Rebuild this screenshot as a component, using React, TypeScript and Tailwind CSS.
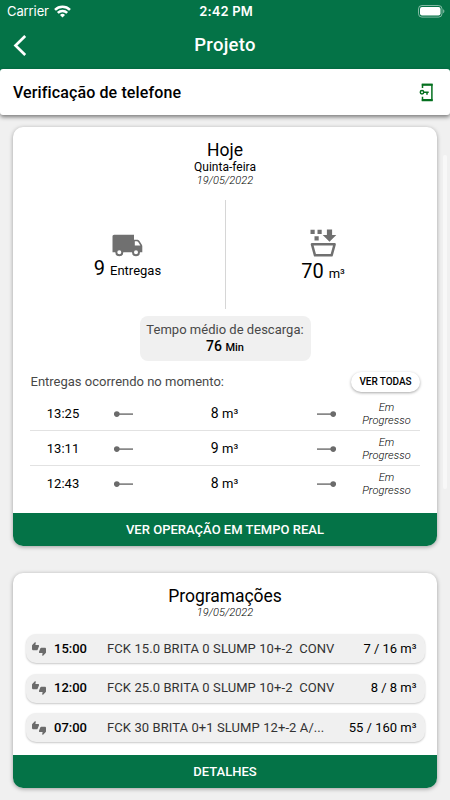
import React from 'react';
import { MdThumbsUpDown } from 'react-icons/md';

const deliveries = [
  { time: '13:25', volume: 8 },
  { time: '13:11', volume: 9 },
  { time: '12:43', volume: 8 },
];

const schedules = [
  { time: '15:00', product: 'FCK 15.0 BRITA 0 SLUMP 10+-2  CONV', volume: '7 / 16 m³' },
  { time: '12:00', product: 'FCK 25.0 BRITA 0 SLUMP 10+-2  CONV', volume: '8 / 8 m³' },
  { time: '07:00', product: 'FCK 30 BRITA 0+1 SLUMP 12+-2 A/...', volume: '55 / 160 m³' },
];

const StatusBar: React.FC = () => (
  <div className="flex h-[23px] items-center justify-between pl-[7px] pr-[5px] font-[Inter,sans-serif] text-[13px] text-white">
    <div className="flex w-[100px] items-center gap-[5px]">
      <span className="tracking-[-0.1px]">Carrier</span>
      <svg width="17" height="13" viewBox="0 0 17 13" fill="none" stroke="white" strokeWidth="2.5">
        <path d="M1 4.8a10.6 10.6 0 0 1 15 0" />
        <path d="M3.8 7.9a6.6 6.6 0 0 1 9.4 0" />
        <path d="M8.5 12.5 6 10a3.6 3.6 0 0 1 5 0z" fill="white" stroke="none" />
      </svg>
    </div>
    <span className="font-semibold tracking-[0.15px]">2:42 PM</span>
    <div className="flex w-[100px] justify-end">
      <svg width="27" height="13" viewBox="0 0 27 13">
        <rect x="0.5" y="0.5" width="23.5" height="11.6" rx="3.4" fill="none" stroke="white" strokeOpacity="0.5" />
        <rect x="2" y="2" width="20.5" height="8.6" rx="2" fill="white" />
        <path d="M25.2 4.2c1.6.6 1.6 3.4 0 4z" fill="white" fillOpacity="0.55" />
      </svg>
    </div>
  </div>
);

const PhoneKeyIcon: React.FC = () => (
  <svg width="15" height="19" viewBox="0 0 15 19" fill="none" stroke="#04701f">
    <path d="M3.5 5V1.4h9.4v16.1H3.5v-3.7" strokeWidth="1.5" />
    <path d="M2.8 1.8h10.8M2.8 17h10.8" strokeWidth="2" />
    <circle cx="3" cy="9.3" r="1.7" strokeWidth="1.5" />
    <path d="M4.7 9.3h5M8 9.3v2.4" strokeWidth="1.5" />
  </svg>
);

const TruckIcon: React.FC = () => (
  <svg width="31" height="23" viewBox="0 0 31 23">
    <path
      d="M2.2.8H22v5h2.8c1.2 0 2 .4 2.7 1.3l2.2 3.3c.5.7.6 1.2.6 2v5.8H.5V2.5C.5 1.5 1.2.8 2.2.8z"
      fill="#707070"
    />
    <path d="M22.8 7.3h2c.6 0 1 .2 1.4.7l2.2 3.5h-5.6z" fill="white" />
    <circle cx="7.3" cy="18.3" r="3" fill="white" stroke="#707070" strokeWidth="2" />
    <circle cx="24" cy="18.3" r="3" fill="white" stroke="#707070" strokeWidth="2" />
  </svg>
);

const BucketIcon: React.FC = () => (
  <svg width="27" height="28" viewBox="0 0 27 28" fill="#707070">
    <path d="M.5.7h4.2v4.2H.5zM7.5.7h4.2v4.2H7.5zM4.5 7.3h4.2v4.2H4.5zM16.9.5h5.2v5.6h4.2L19.5 12.8l-6.8-6.7h4.2z" />
    <path d="M2 15.3h22.6l-3 11H5z" fill="none" stroke="#707070" strokeWidth="2.5" strokeLinejoin="round" />
  </svg>
);

const Connector: React.FC<{ end?: boolean }> = ({ end }) => (
  <svg width="19" height="6" viewBox="0 0 19 6" fill="#6b6b6b">
    <path d="M0 2.4h19v1.4H0z" />
    <circle cx={end ? 16.2 : 2.8} cy="3.1" r="2.8" />
  </svg>
);

const App: React.FC = () => {
  return (
    <div className="h-[800px] w-[450px] overflow-hidden bg-[#f0f0f0] font-[Roboto,sans-serif] text-black">
      <header className="h-[69px] bg-[#047347]">
        <StatusBar />
        <div className="flex h-[45px] items-center justify-between px-[13px] text-white">
          <svg width="14" height="21" viewBox="0 0 14 21" fill="none" stroke="white" strokeWidth="2.7">
            <path d="M12.2 1 2.5 10.5 12.2 20" />
          </svg>
          <h1 className="pt-px text-[18.5px] font-medium tracking-[0.25px]">Projeto</h1>
          <div className="w-[14px]" />
        </div>
      </header>

      <div className="bg-gradient-to-b from-[#047347] from-50% to-[#f0f0f0] to-50%">
        <div className="flex h-[46px] items-center justify-between rounded-[3px] bg-white pl-[13px] pr-[16px] shadow-[0_2px_4px_rgba(0,0,0,0.5)]">
          <span className="pt-px text-[16px] font-medium tracking-[0.12px]">Verificação de telefone</span>
          <PhoneKeyIcon />
        </div>
      </div>

      <main className="flex gap-[3px] pl-[13px] pt-[12px]">
        <div className="flex w-[424px] flex-col gap-[27px]">
          <section className="flex h-[419px] flex-col overflow-hidden rounded-[10px] bg-white shadow-[0_1px_4px_rgba(0,0,0,0.35)]">
            <div className="flex h-[73px] flex-col items-center pt-[13px]">
              <h2 className="text-[17.5px] leading-[20px]">Hoje</h2>
              <p className="text-[12px] leading-[14px]">Quinta-feira</p>
              <p className="text-[11px] font-light italic leading-[13px] tracking-[0.08px]">19/05/2022</p>
            </div>

            <div className="flex h-[109px]">
              <div className="flex w-[212px] flex-col items-center pl-[17px] pt-[34px]">
                <TruckIcon />
                <p className="text-[20px] leading-[22px]">
                  9 <span className="text-[13px]">Entregas</span>
                </p>
              </div>
              <div className="w-px bg-[#d6d6d6]" />
              <div className="flex flex-1 flex-col items-center pr-[17px] pt-[29px]">
                <BucketIcon />
                <p className="mt-[3px] text-[20px] leading-[22px]">
                  70 <span className="text-[13px]">m³</span>
                </p>
              </div>
            </div>

            <div className="mt-[7px] flex h-[45px] w-[171px] flex-col items-center self-center rounded-[8px] bg-[#f0f0f0] pt-[6px]">
              <p className="whitespace-nowrap text-[13px] leading-[16px] tracking-[0.02px] text-[#484848]">Tempo médio de descarga:</p>
              <p className="text-[14px] font-medium leading-[17px]">
                76 <span className="text-[11px]">Min</span>
              </p>
            </div>

            <div className="mt-[10px] flex h-[22px] items-center justify-between pl-[17.5px] pr-[17px]">
              <span className="text-[13px] text-[#484848]">Entregas ocorrendo no momento:</span>
              <button className="h-[20px] w-[69px] rounded-full bg-white text-[10px] font-medium leading-[20px] tracking-[-0.05px] shadow-[0_1px_3px_rgba(0,0,0,0.35)]">
                VER TODAS
              </button>
            </div>

            <ul className="mx-[17px] mt-[3px] divide-y divide-[#e2e2e2]">
              {deliveries.map((item) => (
                <li key={item.time} className="flex h-[34.9px] items-center pt-[1.5px]">
                  <span className="w-[66px] text-center text-[13px]">{item.time}</span>
                  <div className="flex w-[54px] justify-center">
                    <Connector />
                  </div>
                  <span className="w-[149px] text-center text-[14px]">
                    {item.volume} <span className="text-[13px]">m³</span>
                  </span>
                  <div className="flex w-[54px] justify-center">
                    <Connector end />
                  </div>
                  <span className="flex-1 text-center text-[11px] font-light italic leading-[13px] tracking-[0.1px]">
                    Em
                    <br />
                    Progresso
                  </span>
                </li>
              ))}
            </ul>

            <button className="mt-auto h-[33px] bg-[#047347] text-[13px] font-medium tracking-[0.02px] text-white">
              VER OPERAÇÃO EM TEMPO REAL
            </button>
          </section>

          <section className="flex h-[215px] flex-col overflow-hidden rounded-[10px] bg-white shadow-[0_1px_4px_rgba(0,0,0,0.35)]">
            <div className="flex h-[61px] flex-col items-center pt-[13px]">
              <h2 className="text-[17.5px] leading-[20px] tracking-[-0.05px]">Programações</h2>
              <p className="text-[11px] font-light italic leading-[13px] tracking-[0.08px]">19/05/2022</p>
            </div>

            <ul className="flex flex-col gap-[10.5px] px-[12.5px]">
              {schedules.map((item) => (
                <li
                  key={item.time}
                  className="flex h-[29px] items-center rounded-[10px] bg-[#f0f0f0] pl-[6.5px] pr-[8px] text-[13px] shadow-[0_1px_2px_rgba(0,0,0,0.22)]"
                >
                  <MdThumbsUpDown size={14} className="text-[#6b6b6b]" />
                  <span className="ml-[8px] w-[53px] font-medium">{item.time}</span>
                  <span className="flex-1 whitespace-pre tracking-[0.09px] text-[#333]">{item.product}</span>
                  <span>{item.volume}</span>
                </li>
              ))}
            </ul>

            <button className="mt-auto h-[33px] bg-[#047347] text-[13px] font-medium text-white">DETALHES</button>
          </section>
        </div>

        <div className="ml-[3px] mt-[28px] h-[334px] w-[4px] rounded-full bg-[#f8f8f8]" />
      </main>
    </div>
  );
};

export default App;
